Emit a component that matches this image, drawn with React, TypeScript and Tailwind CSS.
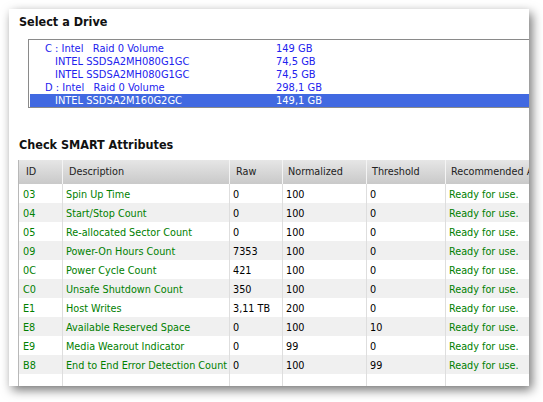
import React from "react";

const drives: { name: string; size: string; indent: boolean; selected?: boolean }[] = [
  { name: "C : Intel   Raid 0 Volume", size: "149 GB", indent: false },
  { name: "INTEL SSDSA2MH080G1GC", size: "74,5 GB", indent: true },
  { name: "INTEL SSDSA2MH080G1GC", size: "74,5 GB", indent: true },
  { name: "D : Intel   Raid 0 Volume", size: "298,1 GB", indent: false },
  { name: "INTEL SSDSA2M160G2GC", size: "149,1 GB", indent: true, selected: true },
];

const rows: [string, string, string, string, string][] = [
  ["03", "Spin Up Time", "0", "100", "0"],
  ["04", "Start/Stop Count", "0", "100", "0"],
  ["05", "Re-allocated Sector Count", "0", "100", "0"],
  ["09", "Power-On Hours Count", "7353", "100", "0"],
  ["0C", "Power Cycle Count", "421", "100", "0"],
  ["C0", "Unsafe Shutdown Count", "350", "100", "0"],
  ["E1", "Host Writes", "3,11 TB", "200", "0"],
  ["E8", "Available Reserved Space", "0", "100", "10"],
  ["E9", "Media Wearout Indicator", "0", "99", "0"],
  ["B8", "End to End Error Detection Count", "0", "100", "99"],
];

const font = { fontFamily: '"DejaVu Sans Condensed", "Liberation Sans", sans-serif' };

export default function App() {
  return (
    <div className="w-[543px] h-[402px] bg-white pl-[9px] pt-[9px] overflow-hidden" style={font}>
      <div className="w-[520px] h-[377px] bg-white overflow-hidden shadow-[3px_4px_10px_rgba(0,0,0,0.55)] flex flex-col">
        <div className="pl-[10px] pt-[2px] h-[21px] text-[12.5px] font-bold text-[#111] leading-[21px]">Select a Drive</div>
        <div className="ml-[19px] mt-[9px] w-[540px] h-[69px] border border-[#8a8a8a] pt-[2px] pl-px flex flex-col">
          {drives.map((d, i) => (
            <div
              key={i}
              className={`h-[13px] shrink-0 flex items-center text-[11px] leading-[13px] ${d.selected ? "bg-[#4169e1] text-white" : "text-[#2222ee]"}`}
            >
              <div className={`w-[246px] whitespace-pre ${d.indent ? "pl-[25px]" : "pl-[15px]"}`}>{d.name}</div>
              <div>{d.size}</div>
            </div>
          ))}
        </div>
        <div className="ml-[12px] mt-[16px] h-px bg-[#dcdcdc]" />
        <div className="pl-[10px] mt-[13px] h-[16px] text-[12.5px] font-bold text-[#111] leading-[16px]">Check SMART Attributes</div>
        <div className="ml-[9px] mt-[7px] w-[600px] border-l border-[#b8b8b8] text-[10.75px]">
          <div className="flex h-[24px] bg-gradient-to-b from-[#e6e6e6] to-[#c9c9c9] text-[#222] whitespace-nowrap">
            <div className="w-[44px] pl-[7px] flex items-center border-r border-[#f4f4f4]">ID</div>
            <div className="w-[167px] pl-[6px] flex items-center border-r border-[#f4f4f4]">Description</div>
            <div className="w-[53px] pl-[6px] flex items-center border-r border-[#f4f4f4]">Raw</div>
            <div className="w-[84px] pl-[5px] flex items-center border-r border-[#f4f4f4]">Normalized</div>
            <div className="w-[79px] pl-[5px] flex items-center border-r border-[#f4f4f4]">Threshold</div>
            <div className="w-[160px] pl-[5px] flex items-center">Recommended Action</div>
          </div>
          {rows.map((r, i) => (
            <div key={i} className={`flex h-[19px] whitespace-nowrap ${i % 2 === 1 ? "bg-[#f0f0f0]" : "bg-white"}`}>
              <div className="w-[44px] pl-[4px] pt-[3px] border-r border-[#dedede] text-[#008000]">{r[0]}</div>
              <div className="w-[167px] pl-[3px] pt-[3px] border-r border-[#dedede] text-[#008000]">{r[1]}</div>
              <div className="w-[53px] pl-[3px] pt-[3px] border-r border-[#dedede] text-black">{r[2]}</div>
              <div className="w-[84px] pl-[3px] pt-[3px] border-r border-[#dedede] text-black">{r[3]}</div>
              <div className="w-[79px] pl-[3px] pt-[3px] border-r border-[#dedede] text-black">{r[4]}</div>
              <div className="w-[160px] pl-[3px] pt-[3px] text-[#008000]">Ready for use.</div>
            </div>
          ))}
          <div className="flex h-[19px] bg-white">
            <div className="w-[44px] border-r border-[#dedede]" />
            <div className="w-[167px] border-r border-[#dedede]" />
            <div className="w-[53px] border-r border-[#dedede]" />
            <div className="w-[84px] border-r border-[#dedede]" />
            <div className="w-[79px] border-r border-[#dedede]" />
            <div className="w-[160px]" />
          </div>
        </div>
      </div>
    </div>
  );
}
